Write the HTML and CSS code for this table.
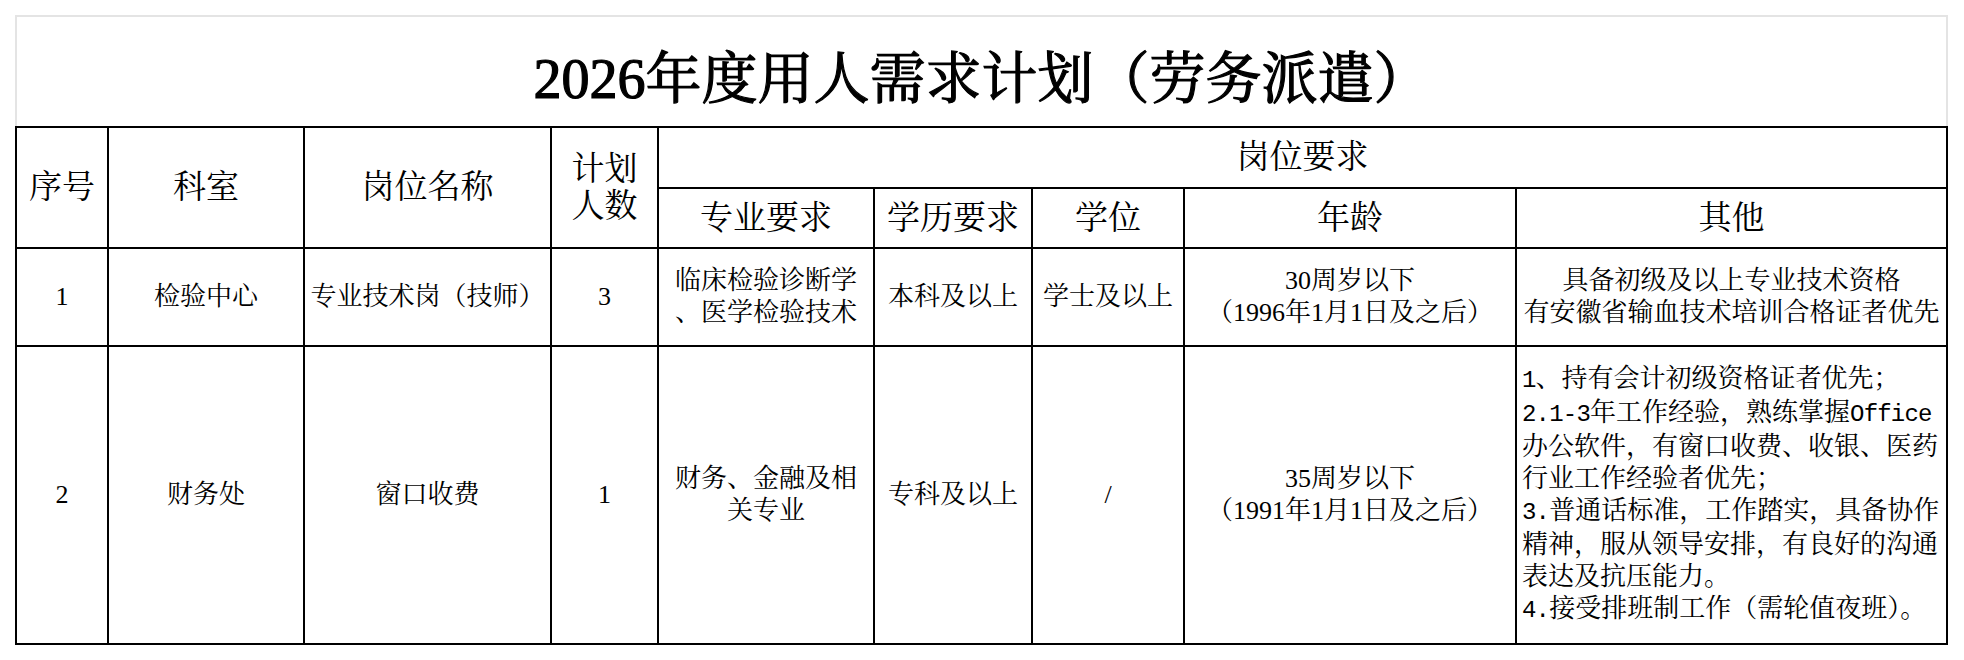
FILE: index.html
```html
<!DOCTYPE html>
<html lang="zh-CN">
<head>
<meta charset="utf-8">
<title>2026年度用人需求计划（劳务派遣）</title>
<link rel="stylesheet" href="styles.css">
</head>
<body>
<div class="sheet">
  <div class="title"><span class="title-text">2026年度用人需求计划（劳务派遣）</span></div>
  <div class="grid">
    <div class="cell head c-no">序号</div>
    <div class="cell head c-dept">科室</div>
    <div class="cell head c-post">岗位名称</div>
    <div class="cell head c-num">计划<br>人数</div>
    <div class="cell head c-req">岗位要求</div>
    <div class="cell head">专业要求</div>
    <div class="cell head">学历要求</div>
    <div class="cell head">学位</div>
    <div class="cell head">年龄</div>
    <div class="cell head">其他</div>

    <div class="cell">1</div>
    <div class="cell">检验中心</div>
    <div class="cell">专业技术岗（技师）</div>
    <div class="cell">3</div>
    <div class="cell">临床检验诊断学<br>、医学检验技术</div>
    <div class="cell">本科及以上</div>
    <div class="cell">学士及以上</div>
    <div class="cell">30周岁以下<br>（1996年1月1日及之后）</div>
    <div class="cell">具备初级及以上专业技术资格<br>有安徽省输血技术培训合格证者优先</div>

    <div class="cell">2</div>
    <div class="cell">财务处</div>
    <div class="cell">窗口收费</div>
    <div class="cell">1</div>
    <div class="cell">财务、金融及相<br>关专业</div>
    <div class="cell">专科及以上</div>
    <div class="cell">/</div>
    <div class="cell">35周岁以下<br>（1991年1月1日及之后）</div>
    <div class="cell left"><div class="list"><span class="mono">1</span>、持有会计初级资格证者优先；<br><span class="mono">2.1-3</span>年工作经验，熟练掌握<span class="mono">Office</span><br>办公软件，有窗口收费、收银、医药<br>行业工作经验者优先；<br><span class="mono">3.</span>普通话标准，工作踏实，具备协作<br>精神，服从领导安排，有良好的沟通<br>表达及抗压能力。<br><span class="mono">4.</span>接受排班制工作（需轮值夜班）。</div></div>
  </div>
</div>
</body>
</html>
```

FILE: styles.css
```css
html, body {
  margin: 0;
  padding: 0;
  background: #ffffff;
}

body {
  font-family: "Liberation Serif", "Noto Serif CJK SC", "Noto Sans CJK SC", serif;
  color: #000000;
}

.sheet {
  margin: 15px 0 0 15px;
  width: 1933px;
}

.title {
  box-sizing: border-box;
  height: 111px;
  border: 2px solid #e4e4e4;
  border-bottom: none;
  display: flex;
  align-items: center;
  justify-content: center;
  padding-top: 14px;
}

.title-text {
  font-size: 56px;
  font-weight: normal;
  line-height: 1;
  -webkit-text-stroke: 1.2px #000000;
}

.grid {
  display: grid;
  grid-template-columns: 90px 194px 245px 105px 214px 156px 150px 330px 429px;
  grid-template-rows: 59px 58px 96px 296px;
  gap: 2px;
  padding: 2px;
  background: #000000;
}

.cell {
  background: #ffffff;
  display: flex;
  align-items: center;
  justify-content: center;
  text-align: center;
  font-size: 26px;
  line-height: 32px;
  white-space: nowrap;
}

.head {
  font-size: 33px;
  line-height: 37px;
}

.c-no, .c-dept, .c-post, .c-num {
  grid-row: 1 / 3;
}

.c-req {
  grid-column: 5 / 10;
}

.left {
  justify-content: flex-start;
  text-align: left;
  padding-left: 5px;
}

.list {
  line-height: 32px;
}

.mono {
  font-family: "Liberation Mono", monospace;
  font-size: 24px;
  letter-spacing: -0.8px;
}
```
